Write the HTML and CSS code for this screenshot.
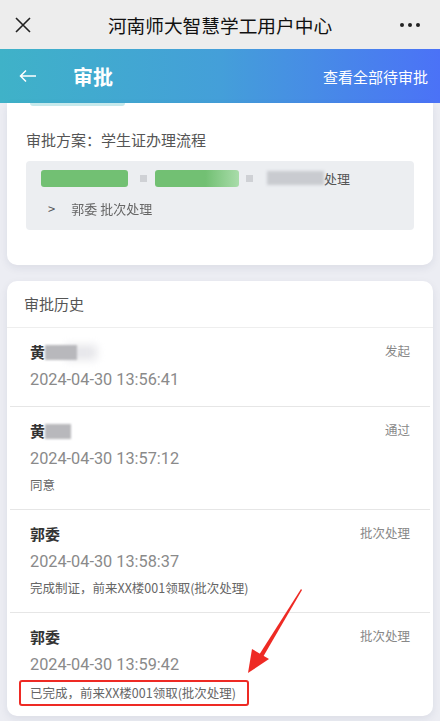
FILE: index.html
```html
<html>
<head>
<meta charset="utf-8">
<title>审批</title>
<link rel="stylesheet" href="styles.css">
</head>
<body>
  <div class="topbar">
    <svg class="close" width="18" height="18" viewBox="0 0 18 18"><path d="M2 2 L16 16 M16 2 L2 16" stroke="#222" stroke-width="1.6" fill="none"/></svg>
    <div class="topbar-title">河南师大智慧学工用户中心</div>
    <div class="more"><i></i><i></i><i></i></div>
  </div>

  <div class="header">
    <svg class="back" width="18" height="14" viewBox="0 0 18 14"><path d="M17 7 H2 M7 1.5 L1.5 7 L7 12.5" stroke="#fff" stroke-width="1.5" fill="none"/></svg>
    <span class="head-title">审批</span>
    <span class="head-link">查看全部待审批</span>
  </div>

  <div class="page">
    <div class="card plan">
      <div class="tab-line"></div>
      <div class="plan-title">审批方案：学生证办理流程</div>
      <div class="flow">
        <div class="flow-row">
          <span class="tag tag1"></span>
          <span class="dot"></span>
          <span class="tag tag2"></span>
          <span class="dot dot2"></span>
          <span class="smudge"></span>
          <span class="flow-text">处理</span>
        </div>
        <div class="flow-row second">
          <span class="gt">&gt;</span>
          <span class="flow-text soft">郭委 批次处理</span>
        </div>
      </div>
    </div>

    <div class="card history">
      <div class="history-head">审批历史</div>

      <div class="item">
        <div class="item-top">
          <div class="name">黄<span class="mask m1"></span></div>
          <div class="action">发起</div>
        </div>
        <div class="date">2024-04-30 13:56:41</div>
      </div>

      <div class="item">
        <div class="item-top">
          <div class="name">黄<span class="mask m2"></span></div>
          <div class="action">通过</div>
        </div>
        <div class="date">2024-04-30 13:57:12</div>
        <div class="comment">同意</div>
      </div>

      <div class="item">
        <div class="item-top">
          <div class="name">郭委</div>
          <div class="action">批次处理</div>
        </div>
        <div class="date">2024-04-30 13:58:37</div>
        <div class="comment">完成制证，前来XX楼001领取(批次处理)</div>
      </div>

      <div class="item last">
        <div class="item-top">
          <div class="name">郭委</div>
          <div class="action">批次处理</div>
        </div>
        <div class="date">2024-04-30 13:59:42</div>
        <div class="comment"><span class="marked">已完成，前来XX楼001领取(批次处理)</span></div>
      </div>

      <svg class="arrow" width="70" height="95" viewBox="0 0 70 95">
        <path d="M56 2 L57 3 L18 70 L14 68 Z" fill="#ee2a24"/>
        <path d="M3 86 L7 62 L24 72 Z" fill="#ee2a24"/>
      </svg>
    </div>
  </div>
</body>
</html>
```

FILE: styles.css
```css
body { margin: 0; background: #ecedf3; font-family: "Noto Sans CJK SC", "Noto Sans", sans-serif; color: #333; }

.topbar { height: 49px; background: #ededed; display: flex; align-items: center; justify-content: space-between; padding: 0 20px 0 14px; }
.close { display: block; }
.topbar-title { font-size: 18.7px; color: #111; margin-left: 8px; }
.more { display: flex; gap: 4px; width: 20px; }
.more i { width: 4px; height: 4px; border-radius: 50%; background: #222; }

.header { height: 54px; background: linear-gradient(90deg, #3fb2c8 0%, #449fd9 50%, #4b72f7 100%); display: flex; align-items: center; padding: 0 12px 0 19px; color: #fff; }
.back { display: block; }
.head-title { font-size: 20px; font-weight: bold; margin-left: 36px; flex: 1; }
.head-link { font-size: 15px; }

.page { padding: 0 7px 8px; }
.card { background: #fff; border-radius: 10px; box-shadow: 0 3px 8px rgba(30, 35, 80, 0.08); }

.plan { border-radius: 0 0 10px 10px; padding: 0 19px 35px; }
.tab-line { width: 95px; height: 3px; margin-left: 4px; background: #c6e9ec; border-radius: 0 0 3px 3px; }
.plan-title { font-size: 15px; color: #555; line-height: 22px; margin-top: 23px; }
.flow { margin-top: 10px; background: #eceef1; border-radius: 4px; padding: 6px 15px 11px; }
.flow-row { display: flex; align-items: center; height: 22px; }
.flow-row.second { margin-top: 8px; }
.tag { height: 17px; border-radius: 3px; background: #72c073; filter: blur(0.6px); }
.tag1 { width: 87px; }
.tag2 { width: 84px; background: linear-gradient(90deg, #72c073 60%, #a9dcaa 100%); }
.dot { width: 7px; height: 7px; background: #cfd1d5; margin: 0 8px 0 12px; }
.dot2 { margin-left: 7px; }
.smudge { width: 57px; height: 14px; background: #c9cbd0; filter: blur(1.5px); margin-left: 6px; }
.flow-text { font-size: 13px; color: #555; }
.flow-text.soft { color: #666; filter: blur(0.3px); }
.gt { font-size: 13px; color: #555; margin: 0 16px 0 7px; }

.history { margin-top: 16px; position: relative; }
.history-head { height: 46px; line-height: 46px; font-size: 15px; color: #555; padding-left: 17px; border-bottom: 1px solid #eeeeee; }
.item { margin: 0 3px; padding: 14px 20px 15px; border-bottom: 1px solid #e6e6e6; }
.item.last { border-bottom: none; padding-bottom: 10px; }
.item-top { display: flex; justify-content: space-between; }
.name { font-size: 15px; font-weight: bold; color: #333; line-height: 20px; display: flex; align-items: center; }
.mask { height: 15px; background: #b8b8bc; filter: blur(1px); }
.m1 { width: 32px; box-shadow: 20px 0 8px #e6e6ea; }
.m2 { width: 26px; }
.action { font-size: 12.5px; color: #888; line-height: 18px; }
.date { margin-top: 7px; font-family: Roboto, sans-serif; font-size: 16.3px; color: #8a8a8a; line-height: 22px; }
.comment { margin-top: 6px; font-size: 12.5px; color: #666; line-height: 18px; }
.marked { display: inline-block; border: 2px solid #ee2a24; border-radius: 3px; padding: 2px 11px 2px 9px; margin-left: -11px; margin-top: -2px; }

.arrow { position: absolute; left: 238px; top: 306px; }
```
